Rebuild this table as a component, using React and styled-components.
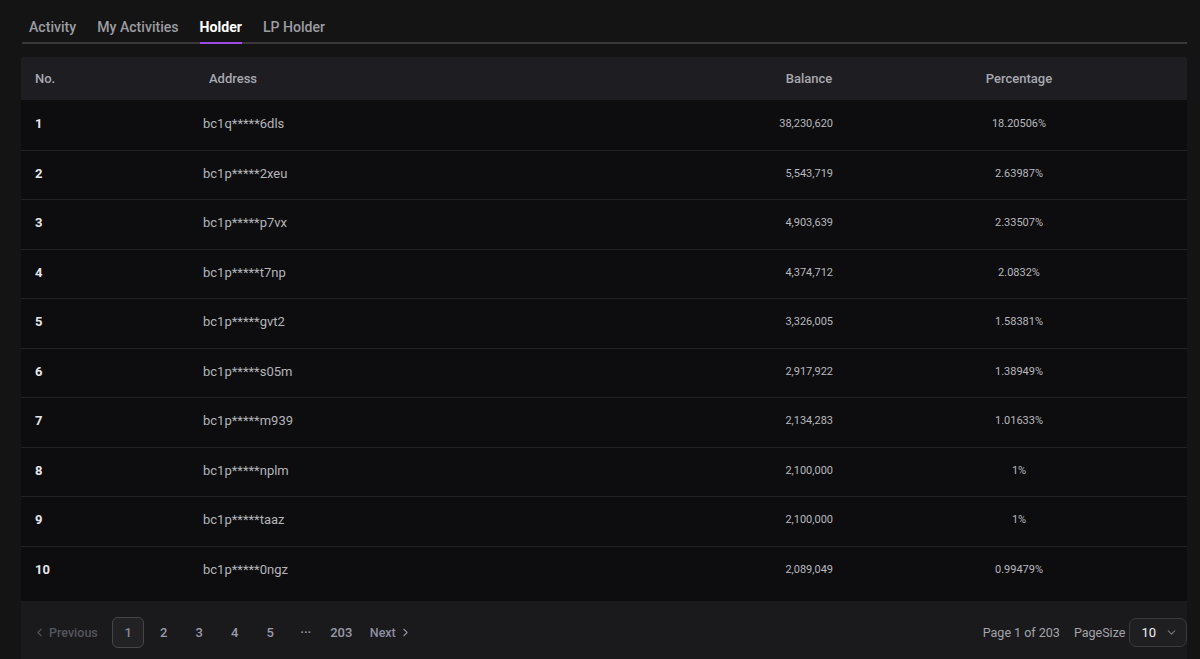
import React from "react";
import styled, { createGlobalStyle } from "styled-components";
import { ChevronLeft, ChevronRight, ChevronDown } from "lucide-react";

const Global = createGlobalStyle`
  html, body { margin: 0; padding: 0; background: #141414; }
  body { font-family: Roboto, "Liberation Sans", Arial, sans-serif; -webkit-font-smoothing: antialiased; }
  * { box-sizing: border-box; }
`;

const Page = styled.div`
  min-height: 659px;
  padding: 10px 13px 0 21px;
  background: #141414;
`;

const TabBar = styled.div`
  display: flex;
  gap: 21px;
  padding-left: 7px;
  margin-left: 1px;
  border-bottom: 2px solid #38383b;
`;

const Tab = styled.div`
  padding: 8px 0 6px;
  margin-bottom: -2px;
  font-size: 14.1px;
  line-height: 18px;
  font-weight: ${(p) => (p.$active ? 700 : 500)};
  color: ${(p) => (p.$active ? "#ffffff" : "#9c9ca2")};
  border-bottom: 2px solid ${(p) => (p.$active ? "#a04be6" : "transparent")};
`;

const Table = styled.div`
  margin-top: 13px;
  background: #0d0d0f;
`;

const cols = "120px 184px 1fr 128px 292px 22px";

const HeaderRow = styled.div`
  display: grid;
  grid-template-columns: ${cols};
  height: 43px;
  padding-bottom: 1px;
  align-items: center;
  background: #1e1e22;
  border-radius: 2px 2px 0 0;
`;

const HeadCell = styled.div`
  font-size: 13px;
  font-weight: 500;
  color: #a8a8b0;
  text-align: ${(p) => p.$align || "center"};
  padding-left: ${(p) => (p.$align === "left" ? "14px" : "0")};
  grid-column: ${(p) => p.$col};
`;

const Body = styled.div`
  padding-bottom: 6px;
`;

const Row = styled.div`
  display: grid;
  grid-template-columns: ${cols};
  height: 49.5px;
  padding-bottom: 3px;
  align-items: center;
  border-top: ${(p) => (p.$first ? "none" : "1px solid #232326")};
`;

const NumCell = styled.div`
  grid-column: 1;
  padding-left: 14px;
  font-size: 13px;
  font-weight: 700;
  color: #e6e6ea;
`;

const AddrCell = styled.div`
  grid-column: 2;
  padding-left: 62px;
  font-size: 13px;
  color: #b4b4ba;
`;

const BalanceCell = styled.div`
  grid-column: 4;
  text-align: right;
  padding-right: 40px;
  font-size: 11px;
  color: #b8b8be;
`;

const PctCell = styled.div`
  grid-column: 5;
  text-align: center;
  font-size: 11px;
  color: #b8b8be;
`;

const Footer = styled.div`
  display: flex;
  align-items: center;
  justify-content: space-between;
  height: 64px;
  padding: 0 0 2px 12px;
  background: #1a1a1c;
`;

const Pager = styled.div`
  display: flex;
  align-items: center;
  gap: 3.5px;
`;

const NavBtn = styled.div`
  display: flex;
  align-items: center;
  gap: 3px;
  font-size: 12.5px;
  font-weight: 500;
  color: ${(p) => (p.$disabled ? "#55555c" : "#8e8ea2")};
  padding-right: ${(p) => (p.$disabled ? "11px" : "0")};
  margin-left: ${(p) => (p.$next ? "9px" : "0")};
`;

const PageBtn = styled.div`
  width: 32px;
  height: 31px;
  display: flex;
  align-items: center;
  justify-content: center;
  font-size: 13px;
  font-weight: 500;
  color: ${(p) => (p.$active ? "#8a8a92" : "#9a9aa8")};
  border: 1px solid ${(p) => (p.$active ? "#46464c" : "transparent")};
  background: ${(p) => (p.$active ? "#222225" : "transparent")};
  border-radius: 6px;
`;

const Right = styled.div`
  display: flex;
  align-items: center;
  font-size: 12.5px;
  color: #a4a4aa;
`;

const PageInfo = styled.span`
  margin-right: 14px;
`;

const Select = styled.div`
  display: flex;
  align-items: center;
  gap: 9px;
  height: 29px;
  margin-left: 4px;
  padding: 0 8px 0 11px;
  border: 1px solid #3a3a3e;
  border-radius: 7px;
  background: #1f1f22;
  color: #f0f0f0;
  font-size: 13px;
  font-weight: 400;
`;

const rows = [
  ["1", "bc1q*****6dls", "38,230,620", "18.20506%"],
  ["2", "bc1p*****2xeu", "5,543,719", "2.63987%"],
  ["3", "bc1p*****p7vx", "4,903,639", "2.33507%"],
  ["4", "bc1p*****t7np", "4,374,712", "2.0832%"],
  ["5", "bc1p*****gvt2", "3,326,005", "1.58381%"],
  ["6", "bc1p*****s05m", "2,917,922", "1.38949%"],
  ["7", "bc1p*****m939", "2,134,283", "1.01633%"],
  ["8", "bc1p*****nplm", "2,100,000", "1%"],
  ["9", "bc1p*****taaz", "2,100,000", "1%"],
  ["10", "bc1p*****0ngz", "2,089,049", "0.99479%"],
];

export default function App() {
  return (
    <>
      <Global />
      <Page>
        <TabBar>
          <Tab>Activity</Tab>
          <Tab>My Activities</Tab>
          <Tab $active>Holder</Tab>
          <Tab>LP Holder</Tab>
        </TabBar>
        <Table>
          <HeaderRow>
            <HeadCell $col={1} $align="left">No.</HeadCell>
            <HeadCell $col={2}>Address</HeadCell>
            <HeadCell $col={4}>Balance</HeadCell>
            <HeadCell $col={5}>Percentage</HeadCell>
          </HeaderRow>
          <Body>
            {rows.map((r, i) => (
              <Row key={r[0]} $first={i === 0}>
                <NumCell>{r[0]}</NumCell>
                <AddrCell>{r[1]}</AddrCell>
                <BalanceCell>{r[2]}</BalanceCell>
                <PctCell>{r[3]}</PctCell>
              </Row>
            ))}
          </Body>
          <Footer>
            <Pager>
              <NavBtn $disabled>
                <ChevronLeft size={13} strokeWidth={2} />
                Previous
              </NavBtn>
              <PageBtn $active>1</PageBtn>
              <PageBtn>2</PageBtn>
              <PageBtn>3</PageBtn>
              <PageBtn>4</PageBtn>
              <PageBtn>5</PageBtn>
              <PageBtn>···</PageBtn>
              <PageBtn>203</PageBtn>
              <NavBtn $next>
                Next
                <ChevronRight size={13} strokeWidth={2} />
              </NavBtn>
            </Pager>
            <Right>
              <PageInfo>Page 1 of 203</PageInfo>
              PageSize
              <Select>
                10
                <ChevronDown size={13} color="#77777d" strokeWidth={2} />
              </Select>
            </Right>
          </Footer>
        </Table>
      </Page>
    </>
  );
}
